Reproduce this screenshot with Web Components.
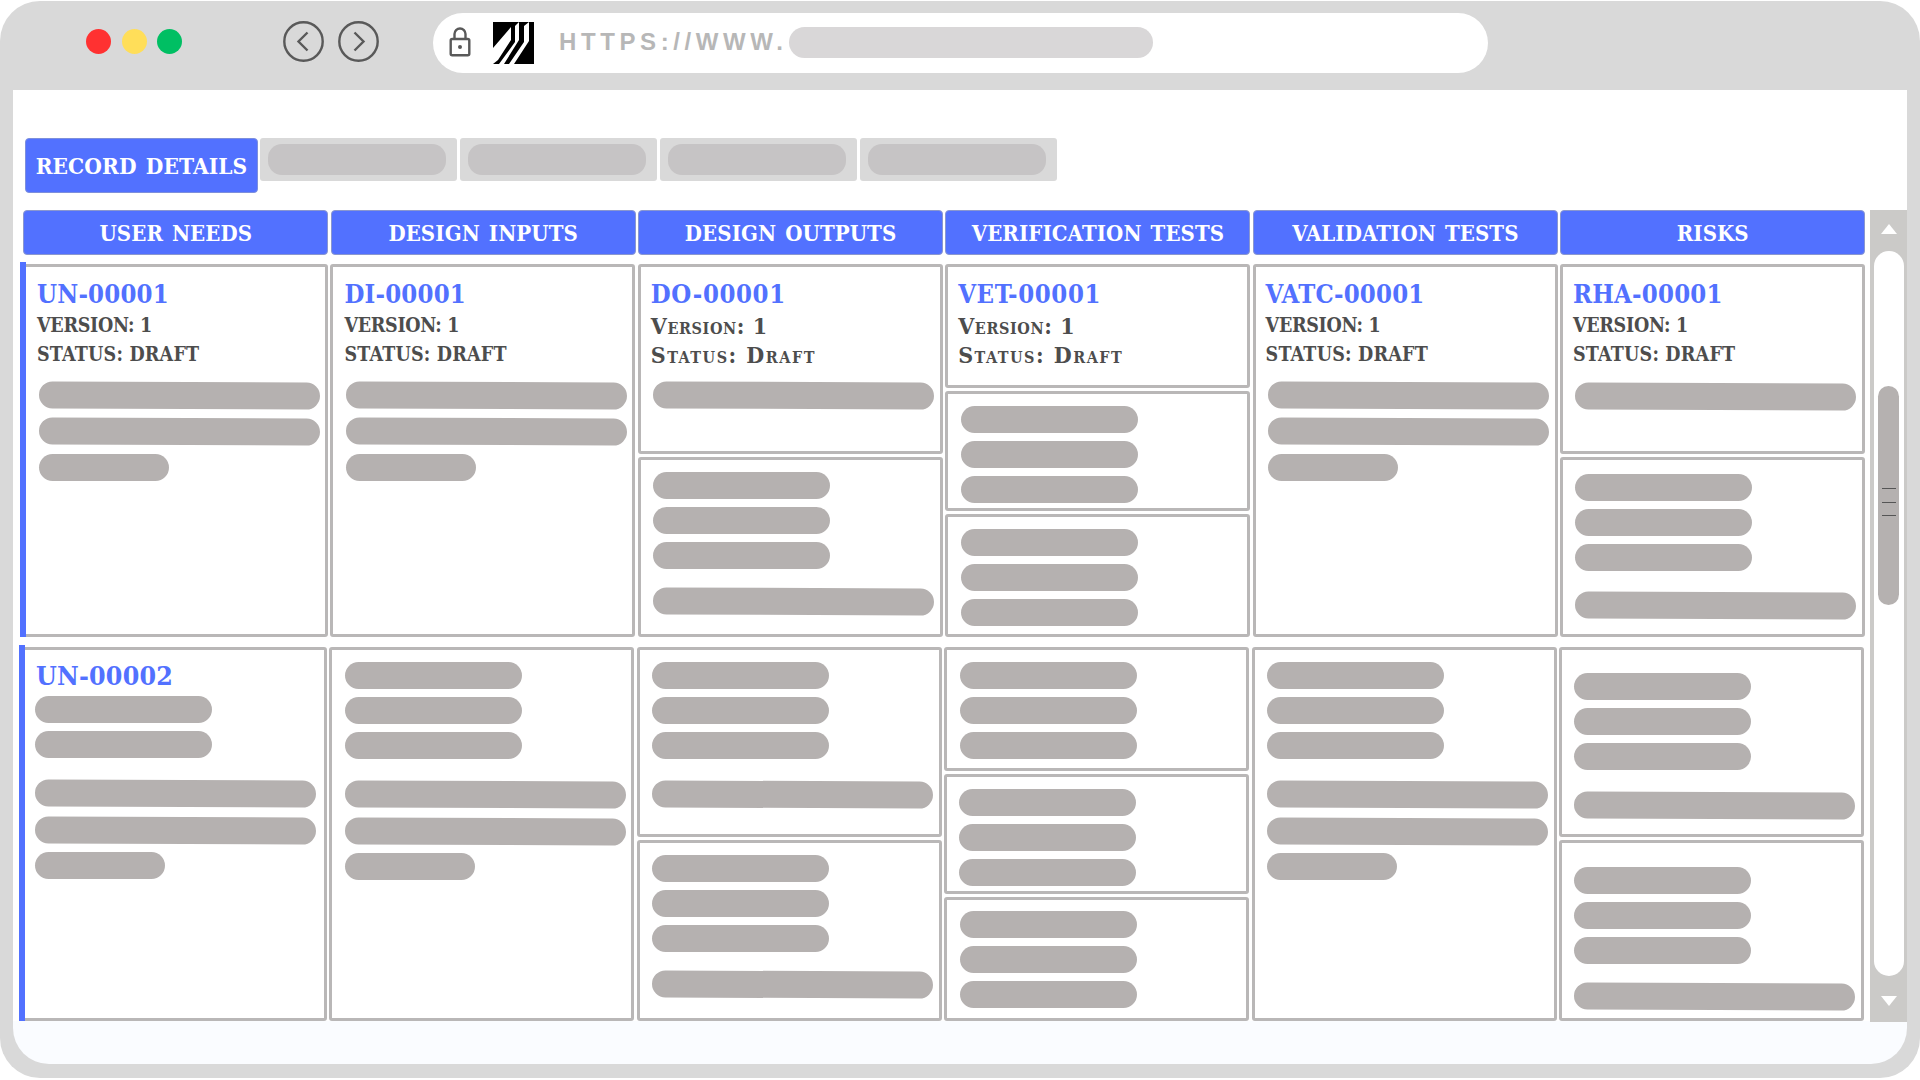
<!DOCTYPE html>
<html>
<head>
<meta charset="utf-8">
<title>Record details</title>
<style>
  html, body { margin: 0; background: #fff; }
  body { width: 1920px; height: 1080px; overflow: hidden; font-family: "DejaVu Serif", serif; }
</style>
</head>
<body>
<browser-window>
  <browser-toolbar slot="toolbar"></browser-toolbar>

  <tab-strip>
    <tab-item active>RECORD DETAILS</tab-item>
    <tab-item></tab-item>
    <tab-item></tab-item>
    <tab-item></tab-item>
    <tab-item></tab-item>
  </tab-strip>

  <trace-board>
    <head-cell slot="head">USER NEEDS</head-cell>
    <head-cell slot="head">DESIGN INPUTS</head-cell>
    <head-cell slot="head">DESIGN OUTPUTS</head-cell>
    <head-cell slot="head">VERIFICATION TESTS</head-cell>
    <head-cell slot="head">VALIDATION TESTS</head-cell>
    <head-cell slot="head">RISKS</head-cell>

    <!-- первая строка -->
    <trace-row slot="rows" first>
      <trace-col>
        <trace-card accent top="14" left="14" h="373">
          <card-title code="UN-00001" version="VERSION: 1" status="STATUS: DRAFT"></card-title>
          <skel-bar w="281" t="10"></skel-bar>
          <skel-bar w="281" t="9"></skel-bar>
          <skel-bar w="130" t="9"></skel-bar>
        </trace-card>
      </trace-col>
      <trace-col>
        <trace-card top="14" left="14" h="373">
          <card-title code="DI-00001" version="VERSION: 1" status="STATUS: DRAFT"></card-title>
          <skel-bar w="281" t="10"></skel-bar>
          <skel-bar w="281" t="9"></skel-bar>
          <skel-bar w="130" t="9"></skel-bar>
        </trace-card>
      </trace-col>
      <trace-col>
        <trace-card top="14" left="13" h="190">
          <card-title small code="DO-00001" version="Version: 1" status="Status: Draft"></card-title>
          <skel-bar w="281" t="10"></skel-bar>
        </trace-card>
        <trace-card top="14" left="13" h="180">
          <skel-bar w="177"></skel-bar>
          <skel-bar w="177" t="8"></skel-bar>
          <skel-bar w="177" t="8"></skel-bar>
          <skel-bar w="281" t="19"></skel-bar>
        </trace-card>
      </trace-col>
      <trace-col>
        <trace-card top="14" left="13" h="124">
          <card-title small code="VET-00001" version="Version: 1" status="Status: Draft"></card-title>
        </trace-card>
        <trace-card top="14" left="14" h="120">
          <skel-bar w="177"></skel-bar>
          <skel-bar w="177" t="8"></skel-bar>
          <skel-bar w="177" t="8"></skel-bar>
        </trace-card>
        <trace-card top="14" left="14" h="123">
          <skel-bar w="177"></skel-bar>
          <skel-bar w="177" t="8"></skel-bar>
          <skel-bar w="177" t="8"></skel-bar>
        </trace-card>
      </trace-col>
      <trace-col>
        <trace-card top="14" left="13" h="373">
          <card-title code="VATC-00001" version="VERSION: 1" status="STATUS: DRAFT"></card-title>
          <skel-bar w="281" t="10"></skel-bar>
          <skel-bar w="281" t="9"></skel-bar>
          <skel-bar w="130" t="9"></skel-bar>
        </trace-card>
      </trace-col>
      <trace-col>
        <trace-card top="14" left="13" h="190">
          <card-title code="RHA-00001" version="VERSION: 1" status="STATUS: DRAFT"></card-title>
          <skel-bar w="281" t="11"></skel-bar>
        </trace-card>
        <trace-card top="15" left="13" h="180">
          <skel-bar w="177" t="1"></skel-bar>
          <skel-bar w="177" t="8"></skel-bar>
          <skel-bar w="177" t="8"></skel-bar>
          <skel-bar w="281" t="21"></skel-bar>
        </trace-card>
      </trace-col>
    </trace-row>

    <!-- вторая строка -->
    <trace-row slot="rows">
      <trace-col>
        <trace-card accent top="13" left="11" h="374">
          <card-title nometa code="UN-00002"></card-title>
          <skel-bar w="177" t="5"></skel-bar>
          <skel-bar w="177" t="8"></skel-bar>
          <skel-bar w="281" t="22"></skel-bar>
          <skel-bar w="281" t="10"></skel-bar>
          <skel-bar w="130" t="8"></skel-bar>
        </trace-card>
      </trace-col>
      <trace-col>
        <trace-card top="14" left="14" h="374">
          <skel-bar w="177"></skel-bar>
          <skel-bar w="177" t="8"></skel-bar>
          <skel-bar w="177" t="8"></skel-bar>
          <skel-bar w="281" t="22"></skel-bar>
          <skel-bar w="281" t="10"></skel-bar>
          <skel-bar w="130" t="8"></skel-bar>
        </trace-card>
      </trace-col>
      <trace-col>
        <trace-card top="14" left="13" h="190">
          <skel-bar w="177"></skel-bar>
          <skel-bar w="177" t="8"></skel-bar>
          <skel-bar w="177" t="8"></skel-bar>
          <skel-bar w="281" t="22"></skel-bar>
        </trace-card>
        <trace-card top="14" left="13" h="181">
          <skel-bar w="177"></skel-bar>
          <skel-bar w="177" t="8"></skel-bar>
          <skel-bar w="177" t="8"></skel-bar>
          <skel-bar w="281" t="19"></skel-bar>
        </trace-card>
      </trace-col>
      <trace-col>
        <trace-card top="14" left="14" h="124">
          <skel-bar w="177"></skel-bar>
          <skel-bar w="177" t="8"></skel-bar>
          <skel-bar w="177" t="8"></skel-bar>
        </trace-card>
        <trace-card top="14" left="13" h="120">
          <skel-bar w="177"></skel-bar>
          <skel-bar w="177" t="8"></skel-bar>
          <skel-bar w="177" t="8"></skel-bar>
        </trace-card>
        <trace-card top="13" left="14" h="124">
          <skel-bar w="177"></skel-bar>
          <skel-bar w="177" t="8"></skel-bar>
          <skel-bar w="177" t="8"></skel-bar>
        </trace-card>
      </trace-col>
      <trace-col>
        <trace-card top="14" left="13" h="374">
          <skel-bar w="177"></skel-bar>
          <skel-bar w="177" t="8"></skel-bar>
          <skel-bar w="177" t="8"></skel-bar>
          <skel-bar w="281" t="22"></skel-bar>
          <skel-bar w="281" t="10"></skel-bar>
          <skel-bar w="130" t="8"></skel-bar>
        </trace-card>
      </trace-col>
      <trace-col>
        <trace-card top="25" left="13" h="190">
          <skel-bar w="177"></skel-bar>
          <skel-bar w="177" t="8"></skel-bar>
          <skel-bar w="177" t="8"></skel-bar>
          <skel-bar w="281" t="22"></skel-bar>
        </trace-card>
        <trace-card top="26" left="13" h="181">
          <skel-bar w="177"></skel-bar>
          <skel-bar w="177" t="8"></skel-bar>
          <skel-bar w="177" t="8"></skel-bar>
          <skel-bar w="281" t="19"></skel-bar>
        </trace-card>
      </trace-col>
    </trace-row>

    <board-scroll slot="scroll"></board-scroll>
  </trace-board>
</browser-window>

<script>
  // Окно браузера: серая рамка, сверху тулбар, снизу голубоватая полоса
  class BrowserWindow extends HTMLElement {
    constructor() {
      super();
      this.attachShadow({ mode: 'open' });
      this.shadowRoot.innerHTML = `
        <style>
          :host {
            display: flex; flex-direction: column;
            width: 1920px; height: 1077px; margin-top: 1px;
            background: #d9d9d9; border-radius: 40px;
            padding: 0 13px 14px; box-sizing: border-box;
          }
          .toolbar { flex: none; height: 89px; margin: 0 -13px; }
          .page {
            flex: 1; background: #fafcff;
            border-radius: 0 0 36px 36px; overflow: hidden;
          }
          .sheet { background: #fff; height: 931px; display: flex; flex-direction: column; }
        </style>
        <div class="toolbar"><slot name="toolbar"></slot></div>
        <div class="page"><div class="sheet"><slot></slot></div></div>
      `;
    }
  }

  class BrowserToolbar extends HTMLElement {
    constructor() {
      super();
      this.attachShadow({ mode: 'open' });
      this.shadowRoot.innerHTML = `
        <style>
          :host { display: flex; align-items: flex-start; height: 89px; }
          .lights { display: flex; gap: 10.5px; margin: 28px 0 0 86px; }
          .lights i { display: block; width: 25px; height: 25px; border-radius: 50%; }
          .nav { display: flex; gap: 14px; margin: 20px 0 0 101px; }
          .nav svg { display: block; width: 41px; height: 41px; }
          .url {
            display: flex; align-items: center; box-sizing: border-box;
            width: 1055px; height: 60px; margin: 12px 0 0 54px;
            padding-left: 16px; background: #fff; border-radius: 30px;
          }
          .lock { display: block; width: 22px; height: 30px; margin-top: -2px; }
          .logo { display: block; width: 41px; height: 42px; margin-left: 22px; }
          .addr {
            margin: -2px 0 0 25px; width: 230px; white-space: nowrap;
            font: bold 24px "Liberation Sans", sans-serif;
            letter-spacing: 4.6px; color: #b7b7b7;
          }
          .pill { width: 364px; height: 31px; border-radius: 15.5px; background: #d9d7d8; margin-top: -1px; }
        </style>
        <div class="lights">
          <i style="background:#ff3131"></i><i style="background:#ffde59"></i><i style="background:#00bf63"></i>
        </div>
        <div class="nav">
          <svg viewBox="0 0 41 41" fill="none" stroke="#595959" stroke-width="2.4">
            <circle cx="20.5" cy="20.5" r="19.2"/><path d="M24.5 11.5 15.5 20.5 24.5 29.5"/>
          </svg>
          <svg viewBox="0 0 41 41" fill="none" stroke="#595959" stroke-width="2.4">
            <circle cx="20.5" cy="20.5" r="19.2"/><path d="M16.5 11.5 25.5 20.5 16.5 29.5"/>
          </svg>
        </div>
        <div class="url">
          <svg class="lock" viewBox="0 0 22 30" fill="none" stroke="#595959" stroke-width="2.4">
            <path d="M5.5 12V7a5.5 5.5 0 0 1 11 0v5"/>
            <rect x="1.7" y="12" width="18.6" height="16.3" rx="1.5"/>
            <circle cx="11" cy="20" r="2" fill="#595959" stroke="none"/>
          </svg>
          <svg class="logo" viewBox="0 0 41 42">
            <rect width="41" height="42" fill="#000"/>
            <path fill="#fff" d="M0 26 18 5V18L5 38 0 42V38ZM22 4 26 0V18L11 42H6L22 20ZM31 4 36 0V19L21 42H16L31 20Z"/>
          </svg>
          <div class="addr">HTTPS://WWW.</div>
          <div class="pill"></div>
        </div>
      `;
    }
  }

  class TabStrip extends HTMLElement {
    constructor() {
      super();
      this.attachShadow({ mode: 'open' });
      this.shadowRoot.innerHTML = `
        <style>
          :host { display: flex; gap: 3px; align-items: flex-start; padding: 48px 0 0 12px; height: 72px; flex: none; }
        </style>
        <slot></slot>
      `;
    }
  }

  class TabItem extends HTMLElement {
    constructor() {
      super();
      this.attachShadow({ mode: 'open' });
      this.shadowRoot.innerHTML = `
        <style>
          :host {
            display: flex; box-sizing: border-box; width: 197px; height: 43px;
            padding: 6px 11px 0 8px; background: #d9d9d9; border-radius: 3px;
          }
          :host([active]) {
            width: 233px; height: 55px; margin-right: -1px; padding: 0; align-items: center; justify-content: center;
            background: #5271ff; border: 1px solid #7d8fdc; border-radius: 4px;
            color: #fff; font: bold 22.5px "DejaVu Serif Condensed", "DejaVu Serif", serif; letter-spacing: .1px; word-spacing: 2px;
          }
          .pill { flex: 1; height: 31px; border-radius: 14px; background: #c6c4c5; }
          :host([active]) .pill { display: none; }
        </style>
        <div class="pill"></div><slot></slot>
      `;
    }
  }

  // Таблица: заголовки и строки слева, полоса прокрутки справа
  class TraceBoard extends HTMLElement {
    constructor() {
      super();
      this.attachShadow({ mode: 'open' });
      this.shadowRoot.innerHTML = `
        <style>
          :host { display: flex; align-items: flex-start; padding: 0 0 0 7px; flex: 1; }
          .main { width: 1845px; flex: none; padding-left: 3px; box-sizing: border-box; }
          .head { display: grid; grid-template-columns: repeat(6, 305px); column-gap: 2.4px; margin-left: .3px; margin-bottom: 9px; }
          .rows { display: flex; flex-direction: column; gap: 10px; }
          .scroll { margin-left: 5px; }
        </style>
        <div class="main">
          <div class="head"><slot name="head"></slot></div>
          <div class="rows"><slot name="rows"></slot></div>
        </div>
        <div class="scroll"><slot name="scroll"></slot></div>
      `;
    }
  }

  class HeadCell extends HTMLElement {
    constructor() {
      super();
      this.attachShadow({ mode: 'open' });
      this.shadowRoot.innerHTML = `
        <style>
          :host {
            display: flex; align-items: center; justify-content: center; box-sizing: border-box;
            height: 45px; background: #5271ff; border: 1px solid #8a97cf; border-radius: 4px;
            color: #fff; font: bold 22px "DejaVu Serif Condensed", "DejaVu Serif", serif; letter-spacing: .1px; word-spacing: 2px;
          }
        </style>
        <slot></slot>
      `;
    }
  }

  class TraceRow extends HTMLElement {
    constructor() {
      super();
      this.attachShadow({ mode: 'open' });
      this.shadowRoot.innerHTML = `
        <style>
          :host { display: grid; grid-template-columns: repeat(6, 305px); column-gap: 2.4px; margin-left: -1px; }
          :host([first]) { margin-left: 0; }
        </style>
        <slot></slot>
      `;
    }
  }

  class TraceCol extends HTMLElement {
    constructor() {
      super();
      this.attachShadow({ mode: 'open' });
      this.shadowRoot.innerHTML = `
        <style>:host { display: flex; flex-direction: column; gap: 3px; }</style>
        <slot></slot>
      `;
    }
  }

  class TraceCard extends HTMLElement {
    constructor() {
      super();
      this.attachShadow({ mode: 'open' });
      this.shadowRoot.innerHTML = `
        <style>
          :host {
            display: flex; flex-direction: column; align-items: flex-start; box-sizing: border-box;
            position: relative; background: #fff;
            border: 3px solid #b9b7b7; border-radius: 3px;
          }
          .accent { position: absolute; left: -6px; top: -5px; bottom: -3px; width: 6px; background: #5271ff; }
        </style>
        <slot></slot>
      `;
      this.style.height = this.getAttribute('h') + 'px';
      // рамка 3px, отступы в атрибутах считаются от внешнего края + 2px
      this.style.paddingTop = (this.getAttribute('top') - 2) + 'px';
      this.style.paddingLeft = (this.getAttribute('left') - 1) + 'px';
      if (this.hasAttribute('accent')) {
        const bar = document.createElement('div');
        bar.className = 'accent';
        this.shadowRoot.appendChild(bar);
      }
    }
  }

  class CardTitle extends HTMLElement {
    constructor() {
      super();
      this.attachShadow({ mode: 'open' });
      const version = this.getAttribute('version');
      const status = this.getAttribute('status');
      this.shadowRoot.innerHTML = `
        <style>
          :host { display: block; height: 93px; margin-left: -2px; white-space: nowrap; font-family: "DejaVu Serif Condensed", "DejaVu Serif", serif; font-weight: bold; }
          :host([nometa]) { height: 30px; margin-left: 1px; }
          .code { font-size: 25.5px; line-height: 30px; color: #5271ff; letter-spacing: .2px; }
          :host([nometa]) .code { font-size: 26.5px; }
          :host([small]) .code { letter-spacing: .6px; }
          .meta { font-size: 19.5px; line-height: 29px; color: #4d4d4d; letter-spacing: .2px; }
          .code + .meta { margin-top: 2px; letter-spacing: -.3px; }
          :host([small]) .meta { font-variant: small-caps; font-size: 23px; letter-spacing: 1.5px; }
          :host([small]) .code + .meta { letter-spacing: .6px; }
        </style>
        <div class="code">${this.getAttribute('code')}</div>
        ${version ? `<div class="meta">${version}</div><div class="meta">${status}</div>` : ''}
      `;
    }
  }

  class SkelBar extends HTMLElement {
    constructor() {
      super();
      this.attachShadow({ mode: 'open' });
      this.shadowRoot.innerHTML = `
        <style>
          :host { display: block; height: 27px; border-radius: 13.5px; background: #b5b1b0; flex: none; }
        </style>
      `;
      const w = +this.getAttribute('w');
      this.style.width = w + 'px';
      this.style.marginTop = (this.getAttribute('t') || 0) + 'px';
      // длинные полосы чуть наклонены, как в оригинале
      if (w > 200) this.style.transform = 'rotate(.25deg)';
    }
  }

  class BoardScroll extends HTMLElement {
    constructor() {
      super();
      this.attachShadow({ mode: 'open' });
      this.shadowRoot.innerHTML = `
        <style>
          :host {
            display: flex; flex-direction: column; align-items: center; box-sizing: border-box;
            width: 37px; height: 812px; background: #cbcac8; padding-top: 14px;
          }
          .arrow { width: 16px; height: 10px; display: block; flex: none; }
          .track {
            width: 30px; height: 725px; margin: 17px 0 20px; border-radius: 15px; background: #fff;
            display: flex; justify-content: center; padding-top: 135px; box-sizing: border-box; flex: none;
          }
          .thumb {
            width: 21px; height: 219px; border-radius: 10.5px; background: #b5b1b0;
            display: flex; flex-direction: column; align-items: center; gap: 12.5px; padding-top: 102px; box-sizing: border-box;
          }
          .thumb i { display: block; width: 14px; height: 1px; background: #555; }
        </style>
        <svg class="arrow" viewBox="0 0 16 10"><path d="M8 0 16 10H0Z" fill="#fff"/></svg>
        <div class="track"><div class="thumb"><i></i><i></i><i></i></div></div>
        <svg class="arrow" viewBox="0 0 16 10"><path d="M0 0H16L8 10Z" fill="#fff"/></svg>
      `;
    }
  }

  // Регистрируем компоненты
  customElements.define('browser-window', BrowserWindow);
  customElements.define('browser-toolbar', BrowserToolbar);
  customElements.define('tab-strip', TabStrip);
  customElements.define('tab-item', TabItem);
  customElements.define('trace-board', TraceBoard);
  customElements.define('head-cell', HeadCell);
  customElements.define('trace-row', TraceRow);
  customElements.define('trace-col', TraceCol);
  customElements.define('trace-card', TraceCard);
  customElements.define('card-title', CardTitle);
  customElements.define('skel-bar', SkelBar);
  customElements.define('board-scroll', BoardScroll);
</script>
</body>
</html>
